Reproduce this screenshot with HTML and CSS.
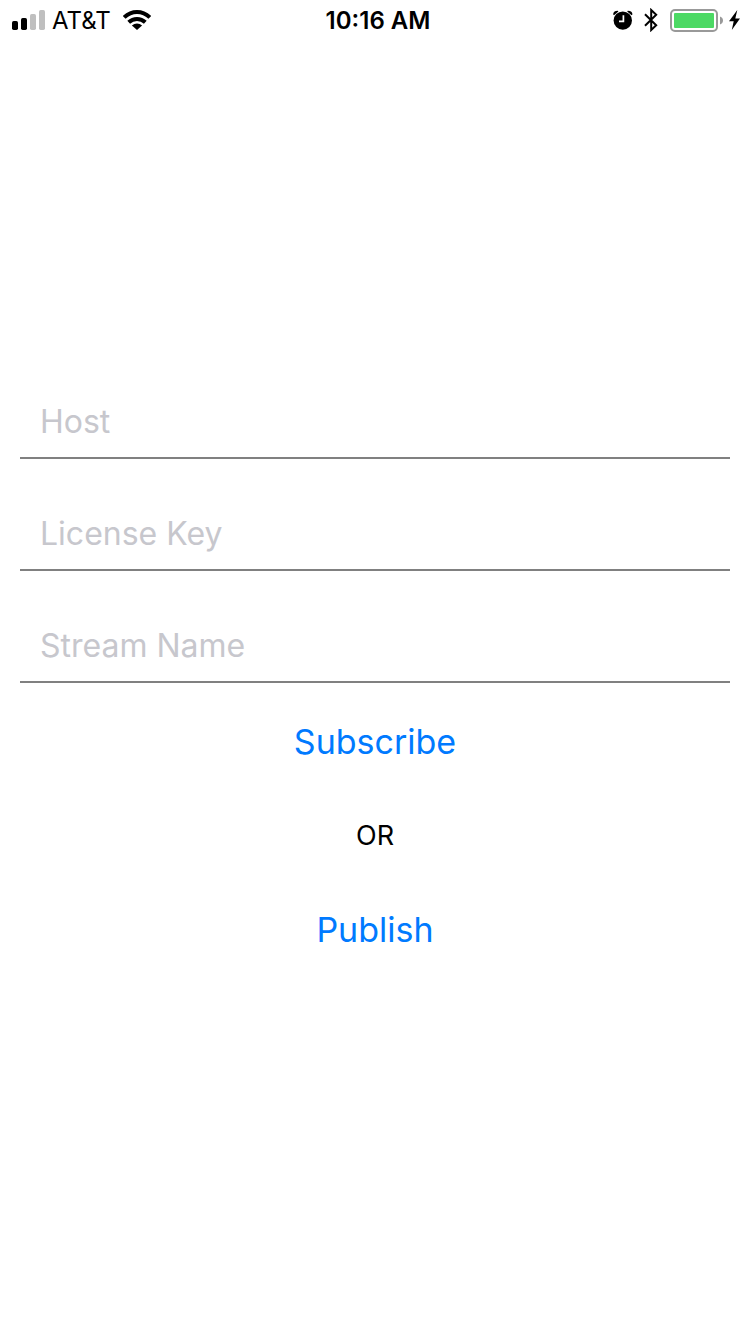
FILE: index.html
```html
<!DOCTYPE html>
<html lang="en">
<head>
<meta charset="utf-8">
<meta name="viewport" content="width=device-width, initial-scale=1">
<title>Stream</title>
<link rel="stylesheet" href="styles.css">
</head>
<body>
<header class="status">
  <div class="status-side">
    <svg class="signal" width="33" height="20" viewBox="0 0 33 20" aria-hidden="true">
      <rect x="0" y="11" width="6" height="9" rx="1.7"/>
      <rect x="9" y="8" width="6" height="12" rx="1.7"/>
      <rect x="18" y="4" width="6" height="16" rx="1.7" fill="#bfbfbf"/>
      <rect x="27" y="0" width="6" height="20" rx="1.7" fill="#bfbfbf"/>
    </svg>
    <span class="carrier">AT&amp;T</span>
    <svg class="wifi" width="28" height="20" viewBox="0 0 28 20" aria-hidden="true">
      <g fill="none" stroke="#000" stroke-width="4">
        <path d="M1.2 7.4Q6.8 2 14 2T26.8 7.4"/>
        <path d="M5.7 12.2Q9.2 8.9 14 8.9T22.3 12.2"/>
      </g>
      <path d="M8.9 15.4Q11.2 13.4 14 13.4T19.1 15.4L14 20Z"/>
    </svg>
  </div>
  <time class="clock">10:16 AM</time>
  <div class="status-side status-right">
    <svg width="20" height="20" viewBox="0 0 20 20" aria-hidden="true">
      <circle cx="9.8" cy="10.6" r="9.2"/>
      <path d="M0.2 4.6Q0 1 4.8 0.8L5.4 1.6L1 5.2ZM19.4 4.6Q19.6 1 14.8 0.8L14.2 1.6L18.6 5.2Z"/>
      <path d="M10.4 5.2V11.3H6" fill="none" stroke="#fff" stroke-width="1.7"/>
    </svg>
    <svg class="bluetooth" width="14" height="24" viewBox="0 0 14 24" aria-hidden="true">
      <path d="M1 6.2L12.2 17.2L7.2 22V2L12.2 6.8L1 17.8" fill="none" stroke="#000" stroke-width="2"/>
    </svg>
    <svg class="battery" width="53" height="24" viewBox="0 0 53 24" aria-hidden="true">
      <rect x="1" y="2" width="46" height="21" rx="4" fill="none" stroke="#999" stroke-width="2"/>
      <rect x="4" y="5" width="40" height="15" rx="1" fill="#4cd964"/>
      <path d="M50 8.5Q53 9.7 53 12.5T50 16.5Z" fill="#999"/>
    </svg>
    <svg class="bolt" width="15" height="20" viewBox="0 0 15 20" aria-hidden="true">
      <path d="M8.3 0L0 11.3H4.7L2.8 20L11 8.4H6.3Z"/>
    </svg>
  </div>
</header>
<main>
  <form class="form">
    <div class="fields">
      <input class="field" type="text" placeholder="Host" aria-label="Host">
      <input class="field" type="text" placeholder="License Key" aria-label="License Key">
      <input class="field" type="text" placeholder="Stream Name" aria-label="Stream Name">
    </div>
    <div class="actions">
      <button class="action" type="button">Subscribe</button>
      <span class="or">OR</span>
      <button class="action" type="button">Publish</button>
    </div>
  </form>
</main>
</body>
</html>
```
FILE: styles.css
```css
* {
  box-sizing: border-box;
}

body {
  margin: 0;
  background: #fff;
  color: #000;
  font-family: Inter, Roboto, sans-serif;
}

.status {
  display: grid;
  grid-template-columns: 1fr auto 1fr;
  align-items: center;
  height: 40px;
  padding: 0 6px 0 12px;
  font-size: 24px;
  line-height: 32px;
}

.status svg {
  flex: none;
}

.status-side {
  display: flex;
  align-items: center;
}

.status-right {
  justify-content: flex-end;
}

.carrier,
.clock {
  padding-top: 2px;
}

.carrier {
  margin: 0 12px 0 7px;
}

.clock {
  font-weight: 600;
}

.bluetooth {
  margin: 0 12px 0 11px;
}

.bolt {
  margin-left: 6px;
}

.form {
  display: flex;
  flex-direction: column;
  gap: 37px;
  padding: 347px 20px 40px;
}

.fields {
  display: flex;
  flex-direction: column;
  gap: 40px;
}

.field {
  width: 100%;
  height: 72px;
  padding: 0 20px 2px;
  border: 0;
  border-bottom: 2px solid #808080;
  border-radius: 0;
  background: none;
  color: #000;
  font-family: inherit;
  font-size: 32px;
  outline: none;
}

.field::placeholder {
  color: #c7c7cd;
  opacity: 1;
}

.actions {
  display: flex;
  flex-direction: column;
  align-items: center;
  gap: 50px;
}

.action,
.or {
  padding: 0;
  line-height: 44px;
}

.action {
  border: 0;
  background: none;
  color: #007aff;
  font-family: inherit;
  font-size: 34px;
  cursor: pointer;
}

.or {
  font-size: 27px;
}
```
